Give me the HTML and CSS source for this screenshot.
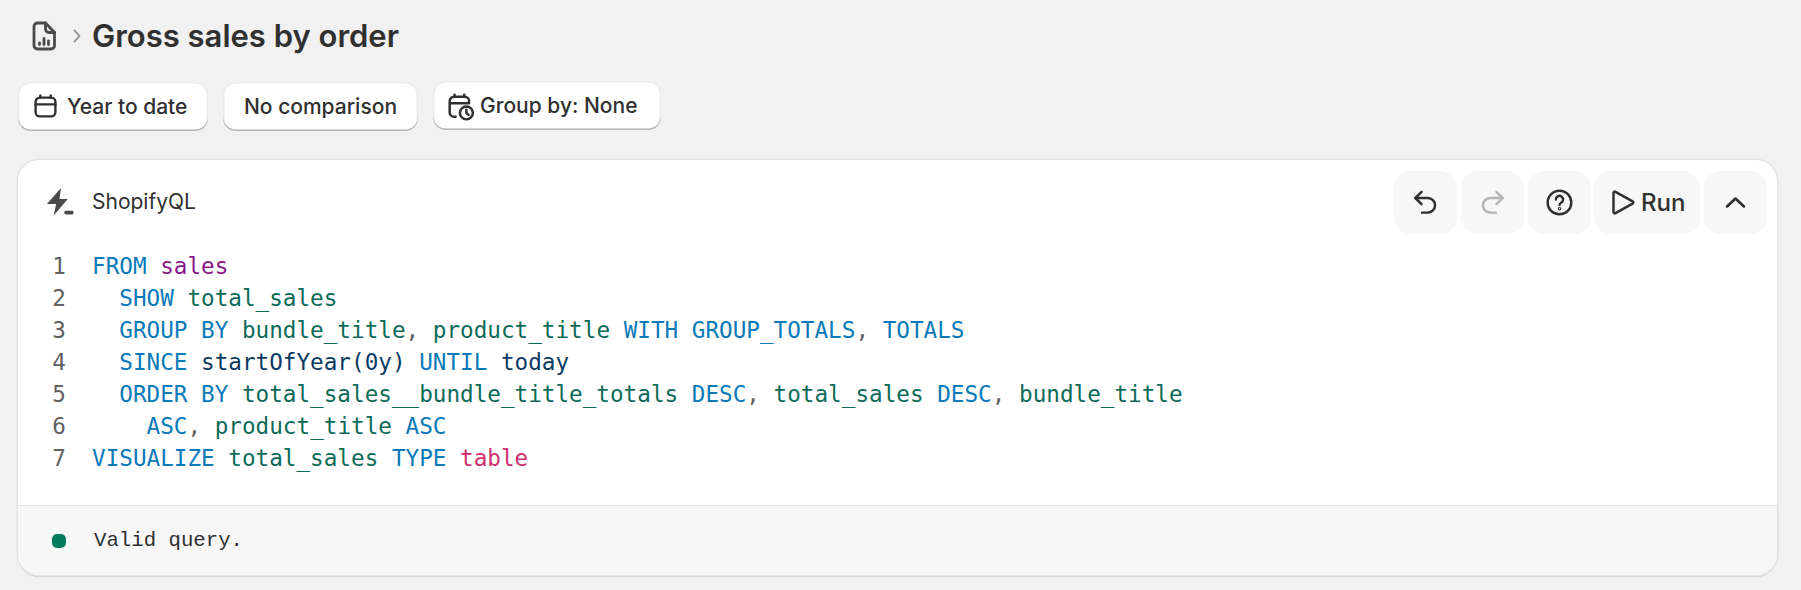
FILE: index.html
```html
<!DOCTYPE html>
<html lang="en">
<head>
<meta charset="utf-8">
<title>Gross sales by order</title>
<link rel="stylesheet" href="styles.css">
</head>
<body>
<header class="crumbs">
  <svg class="crumb-icon" viewBox="0 0 24 30" fill="none" stroke="#4a4a4a" stroke-width="2.8" stroke-linejoin="round" stroke-linecap="round">
    <path d="M5.5 2h8l9 9.5v13a3.5 3.5 0 0 1-3.5 3.500H5.500A3.500 3.500 0 0 1 2 24.500V5.500A3.500 3.500 0 0 1 5.500 2z"/>
    <path d="M13.500 2v6a3.500 3.500 0 0 0 3.500 3.500h5.500"/>
    <path d="M7.500 23.500v-1.500M12 23.500v-6M16.500 23.500v-3.500"/>
  </svg>
  <svg class="crumb-sep" viewBox="0 0 8 14" fill="none" stroke="#8a8a8a" stroke-width="1.800" stroke-linecap="round" stroke-linejoin="round"><path d="M1.500 1.500 6.500 7l-5 5.500"/></svg>
  <h1 class="title">Gross sales by order</h1>
</header>

<div class="filters">
  <button class="filter filter-date">
    <svg class="filter-icon" viewBox="0 0 24 24" fill="none" stroke="#303030" stroke-width="2.300" stroke-linecap="round" stroke-linejoin="round"><path d="M6.500 3.500h11a4 4 0 0 1 4 4v10a4 4 0 0 1-4 4h-11a4 4 0 0 1-4-4v-10a4 4 0 0 1 4-4z"/><path d="M2.500 10h19M7 1.500v2M17 1.500v2"/></svg>
    <span>Year to date</span>
  </button>
  <button class="filter filter-compare"><span>No comparison</span></button>
  <button class="filter filter-group">
    <svg class="filter-icon" viewBox="0 0 26 26" fill="none" stroke="#303030" stroke-width="2.300" stroke-linecap="round" stroke-linejoin="round"><path d="M8 22H6.500a4 4 0 0 1-4-4V7.500a4 4 0 0 1 4-4h10a4 4 0 0 1 4 4V9M2.500 9.500h18M7 1.500v2M16 1.500v2"/><circle cx="18" cy="18.500" r="6"/><path d="M18 15.500v3.300l2 1.400"/></svg>
    <span>Group by: None</span>
  </button>
</div>

<section class="card">
  <div class="card-head">
    <div class="brand">
      <svg class="brand-icon" viewBox="0 0 30 30" fill="#4a4a4a"><path d="M16.500 1 2 17.500h9.500L9 29.500 23.500 12.500h-8.500z"/><rect x="20" y="24.500" width="9.500" height="4" rx="1.500"/></svg>
      <span>ShopifyQL</span>
    </div>
    <div class="actions">
      <button class="action">
        <svg class="action-icon" viewBox="0 0 24 24" fill="none" stroke="#303030" stroke-width="2.200" stroke-linecap="round" stroke-linejoin="round"><path d="M8.500 2.500 3 8l5.500 5.500"/><path d="M3 8h11a6.500 6.500 0 0 1 0 13H9"/></svg>
      </button>
      <button class="action">
        <svg class="action-icon" viewBox="0 0 24 24" fill="none" stroke="#b5b5b5" stroke-width="2.200" stroke-linecap="round" stroke-linejoin="round"><path d="M15.500 2.500 21 8l-5.500 5.500"/><path d="M21 8H10a6.500 6.500 0 0 0 0 13h5"/></svg>
      </button>
      <button class="action">
        <svg class="action-icon" viewBox="0 0 24 24" fill="none" stroke="#303030" stroke-width="2.200" stroke-linecap="round" stroke-linejoin="round"><circle cx="12" cy="12" r="10.500"/><path d="M8.800 9.300a3.200 3.200 0 1 1 4.900 2.700c-1 .6-1.700 1.200-1.700 2.300"/><circle cx="12" cy="17.500" r=".5"/></svg>
      </button>
      <button class="action action-run">
        <svg class="action-icon" viewBox="0 0 24 24" fill="none" stroke="#303030" stroke-width="2.200" stroke-linecap="round" stroke-linejoin="round"><path d="M4 3.500c0-1 1-1.500 1.800-1L21 11c.8.500.8 1.500 0 2L5.800 21.500c-.8.500-1.800 0-1.800-1z"/></svg>
        <span>Run</span>
      </button>
      <button class="action">
        <svg class="action-icon" viewBox="0 0 24 24" fill="none" stroke="#303030" stroke-width="2.400" stroke-linecap="round" stroke-linejoin="round"><path d="M4.500 15.500 12 8.500l7.500 7"/></svg>
      </button>
    </div>
  </div>

  <div class="code">
    <div class="line"><span class="num">1</span><span class="src"><span class="kw">FROM</span> <span class="tbl">sales</span></span></div>
    <div class="line"><span class="num">2</span><span class="src">  <span class="kw">SHOW</span> <span class="col">total_sales</span></span></div>
    <div class="line"><span class="num">3</span><span class="src">  <span class="kw">GROUP BY</span> <span class="col">bundle_title</span><span class="pun">,</span> <span class="col">product_title</span> <span class="kw">WITH GROUP_TOTALS</span><span class="pun">,</span> <span class="kw">TOTALS</span></span></div>
    <div class="line"><span class="num">4</span><span class="src">  <span class="kw">SINCE</span> <span class="fn">startOfYear(0y)</span> <span class="kw">UNTIL</span> <span class="fn">today</span></span></div>
    <div class="line"><span class="num">5</span><span class="src">  <span class="kw">ORDER BY</span> <span class="col">total_sales__bundle_title_totals</span> <span class="kw">DESC</span><span class="pun">,</span> <span class="col">total_sales</span> <span class="kw">DESC</span><span class="pun">,</span> <span class="col">bundle_title</span></span></div>
    <div class="line"><span class="num">6</span><span class="src">    <span class="kw">ASC</span><span class="pun">,</span> <span class="col">product_title</span> <span class="kw">ASC</span></span></div>
    <div class="line"><span class="num">7</span><span class="src"><span class="kw">VISUALIZE</span> <span class="col">total_sales</span> <span class="kw">TYPE</span> <span class="viz">table</span></span></div>
  </div>

  <footer class="status">
    <span class="dot"></span>
    <span class="status-text">Valid query.</span>
  </footer>
</section>
</body>
</html>
```
FILE: styles.css
```css
* { box-sizing: border-box; }
html, body { margin: 0; padding: 0; }
body {
  width: 1801px;
  height: 590px;
  overflow: hidden;
  background: #f1f1f1;
  color: #303030;
  font-family: Inter, "Liberation Sans", sans-serif;
  padding: 0 24px 0 18px;
}
button { font: inherit; color: inherit; border: 0; padding: 0; cursor: pointer; }

.crumbs {
  display: flex;
  align-items: center;
  height: 72px;
  padding-left: 14px;
}
.crumb-icon { width: 24px; height: 30px; margin-right: 17px; }
.crumb-sep { width: 8px; height: 14px; margin-right: 11px; }
.title { margin: 0; font-size: 31px; line-height: 40px; font-weight: 600; letter-spacing: 0; color: #303030; }

.filters { display: flex; align-items: flex-start; gap: 15px; margin-top: 9px; height: 50px; }
.filter {
  display: flex;
  align-items: center;
  height: 49px;
  background: #fff;
  border-radius: 13px;
  font-size: 21px;
  font-weight: 550;
  box-shadow: inset 0 -1.500px 0 0 #b5b5b5, inset 0 0 0 1.500px rgba(0,0,0,.08);
  white-space: nowrap;
}
.filter-date { width: 190px; padding-left: 15px; gap: 9px; margin-top: 1px; }
.filter-compare { width: 195px; justify-content: center; margin-top: 1px; }
.filter-group { width: 228px; padding-left: 14px; gap: 5px; }
.filter-date .filter-icon { width: 25px; height: 25px; }
.filter-group .filter-icon { width: 28px; height: 28px; margin-top: 2px; }

.card {
  margin-top: 29px;
  height: 415px;
  background: #fff;
  border-radius: 21px;
  display: flex;
  flex-direction: column;
  overflow: hidden;
  box-shadow: 0 0 0 1.500px #e3e3e3, 0 1.500px 1px #c8c8c8;
}
.card-head {
  display: flex;
  justify-content: space-between;
  padding: 10px 10px 0 27px;
  height: 90px;
}
.brand { display: flex; align-items: center; height: 63px; gap: 18px; font-size: 21px; color: #303030; }
.brand-icon { width: 29px; height: 29px; }
.actions { display: flex; gap: 3.750px; margin-top: 1px; }
.action {
  display: flex;
  align-items: center;
  justify-content: center;
  min-width: 63px;
  height: 63px;
  background: #f7f7f7;
  border-radius: 16px;
  font-size: 24px;
  font-weight: 550;
}
.action-icon { width: 27px; height: 27px; }
.action-run { width: 106px; gap: 5px; }

.code {
  flex: 1;
  font-family: "DejaVu Sans Mono", monospace;
  font-size: 22.650px;
  line-height: 32px;
}
.line { display: flex; height: 32px; white-space: pre; }
.num { width: 74px; padding-right: 26px; text-align: right; color: #616161; }
.kw { color: #0a7ab8; }
.tbl { color: #8a1a8a; }
.col { color: #0d6b58; }
.fn { color: #0b3a63; }
.viz { color: #d0306f; }
.pun { color: #616161; }

.status {
  height: 70px;
  flex: none;
  display: flex;
  align-items: center;
  background: #f7f7f7;
  border-top: 1.500px solid #e3e3e3;
  padding-left: 34px;
  gap: 28px;
}
.dot { width: 14px; height: 14px; border-radius: 5px; background: #047b5d; }
.status-text { font-family: "Liberation Mono", monospace; font-size: 20.700px; color: #303030; }
```
